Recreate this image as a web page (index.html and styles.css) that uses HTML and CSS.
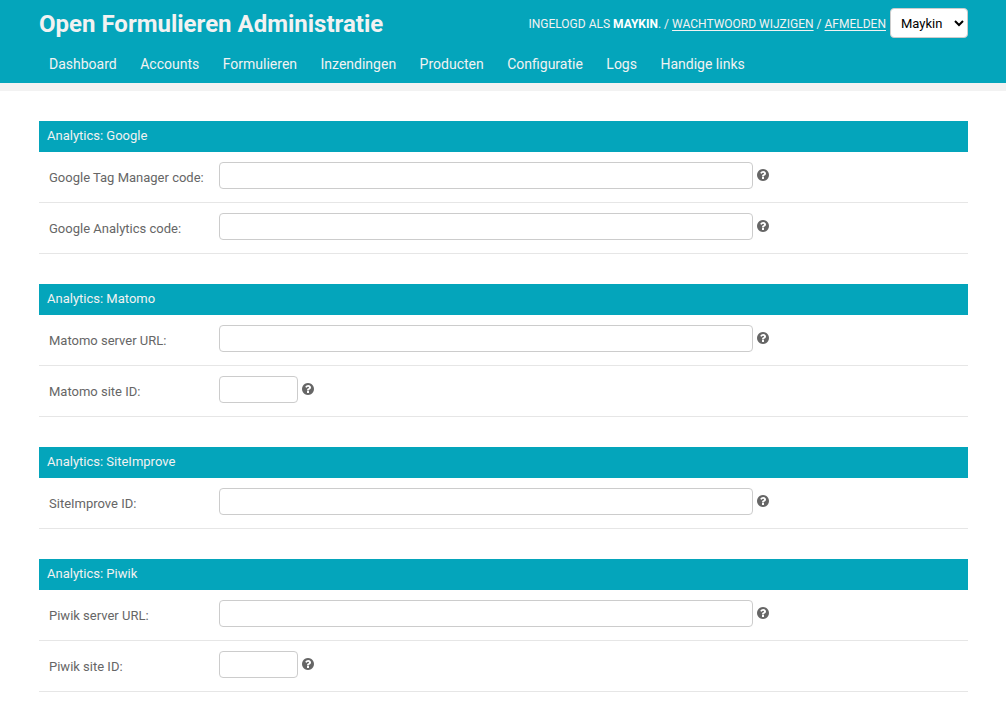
FILE: index.html
```html
<!DOCTYPE html>
<html lang="nl">
<head>
<meta charset="utf-8">
<meta name="viewport" content="width=device-width, initial-scale=1">
<title>Open Formulieren Administratie</title>
<link rel="stylesheet" href="styles.css">
</head>
<body>
<svg class="sprite" aria-hidden="true">
  <symbol id="help" viewBox="0 0 1536 1536">
    <path d="M896 1248v-192q0-14-9-23t-23-9H672q-14 0-23 9t-9 23v192q0 14 9 23t23 9h192q14 0 23-9t9-23zm256-672q0-88-55.500-163T958 297t-170-41q-243 0-371 213-15 24 8 42l132 100q7 6 19 6 16 0 25-12 53-68 86-92 34-24 86-24 48 0 85.500 26t37.500 59q0 38-20 61t-68 45q-63 28-115.500 86.500T640 892v36q0 14 9 23t23 9h192q14 0 23-9t9-23q0-19 21.500-49.500T972 829q32-18 49-28.500t46-35 44.500-48 28-60.500 12.500-81zm384 192q0 209-103 385.500T1153.500 1433 768 1536t-385.500-103T103 1153.500 0 768t103-385.500T382.500 103 768 0t385.500 103T1433 382.500 1536 768z"/>
  </symbol>
</svg>
<header class="header">
  <div class="header__top">
    <h1 class="header__title">Open Formulieren Administratie</h1>
    <div class="user-tools">
      <p class="user-tools__text">Ingelogd als <strong>Maykin</strong>. / <a href="#">Wachtwoord wijzigen</a> / <a href="#">Afmelden</a></p>
      <select class="user-tools__select" aria-label="Thema"><option>Maykin</option></select>
    </div>
  </div>
  <nav class="nav">
    <a href="#">Dashboard</a>
    <a href="#">Accounts</a>
    <a href="#">Formulieren</a>
    <a href="#">Inzendingen</a>
    <a href="#">Producten</a>
    <a href="#">Configuratie</a>
    <a href="#">Logs</a>
    <a href="#">Handige links</a>
  </nav>
</header>
<main class="content">
  <form class="form">
    <section class="module">
      <h2 class="module__title">Analytics: Google</h2>
      <div class="row"><label for="gtm">Google Tag Manager code:</label><input class="field" id="gtm" type="text"><svg class="help"><use href="#help"/></svg></div>
      <div class="row"><label for="ga">Google Analytics code:</label><input class="field" id="ga" type="text"><svg class="help"><use href="#help"/></svg></div>
    </section>
    <section class="module">
      <h2 class="module__title">Analytics: Matomo</h2>
      <div class="row"><label for="matomo-url">Matomo server URL:</label><input class="field" id="matomo-url" type="text"><svg class="help"><use href="#help"/></svg></div>
      <div class="row"><label for="matomo-id">Matomo site ID:</label><input class="field field--small" id="matomo-id" type="text"><svg class="help"><use href="#help"/></svg></div>
    </section>
    <section class="module">
      <h2 class="module__title">Analytics: SiteImprove</h2>
      <div class="row"><label for="siteimprove">SiteImprove ID:</label><input class="field" id="siteimprove" type="text"><svg class="help"><use href="#help"/></svg></div>
    </section>
    <section class="module">
      <h2 class="module__title">Analytics: Piwik</h2>
      <div class="row"><label for="piwik-url">Piwik server URL:</label><input class="field" id="piwik-url" type="text"><svg class="help"><use href="#help"/></svg></div>
      <div class="row"><label for="piwik-id">Piwik site ID:</label><input class="field field--small" id="piwik-id" type="text"><svg class="help"><use href="#help"/></svg></div>
    </section>
  </form>
</main>
</body>
</html>
```
FILE: styles.css
```css
* {
  box-sizing: border-box;
}

body {
  margin: 0;
  background: #fff;
  color: #666;
  font-family: Roboto, sans-serif;
  font-size: 13px;
}

.sprite {
  display: none;
}

.header {
  padding: 8px 38px 9px 39px;
  background: #04a5bb;
  color: #f2f2f2;
  border-bottom: 8px solid #f2f2f2;
}

.header a {
  color: inherit;
}

.header__top {
  display: flex;
  align-items: center;
  justify-content: space-between;
}

.header__title {
  margin: 0;
  font-size: 24px;
  font-weight: 700;
  line-height: 32px;
}

.user-tools {
  display: flex;
  align-items: center;
  gap: 4px;
}

.user-tools__text {
  margin: 0;
  font-size: 12px;
  line-height: 14px;
  text-transform: uppercase;
}

.user-tools__text strong {
  color: #fff;
}

.user-tools__text a {
  text-underline-offset: 2px;
}

.user-tools__select {
  width: 78px;
  height: 30px;
  margin-bottom: 2px;
  padding: 0 0 0 6px;
  border: 1px solid #ccc;
  border-radius: 4px;
  background: #fff;
  color: #000;
  font-family: inherit;
  font-size: 13px;
}

.nav {
  padding-top: 14px;
  font-size: 14px;
  line-height: 20px;
}

.nav a {
  padding: 0 10px;
  text-decoration: none;
}

.content {
  padding: 30px 38px 20px 39px;
}

.form {
  display: flex;
  flex-direction: column;
  gap: 30px;
}

.module__title {
  margin: 0;
  padding: 7px 8px 8px;
  background: #04a5bb;
  color: #f2f2f2;
  font-size: 13px;
  font-weight: 400;
  line-height: 16px;
}

.row {
  display: flex;
  align-items: flex-start;
  padding: 10px 10px 13px;
  border-bottom: 1px solid #e6e6e6;
}

.row label {
  flex: 0 0 170px;
  padding-top: 8px;
  line-height: 16px;
}

.field {
  flex: 0 1 534px;
  min-width: 0;
  height: 27px;
  padding: 5px 6px;
  border: 1px solid #ccc;
  border-radius: 4px;
  background: #fff;
  font: inherit;
}

.field--small {
  flex-basis: 79px;
}

.help {
  flex: none;
  width: 12px;
  height: 12px;
  margin: 7px 0 0 4px;
  fill: #666;
}
```
